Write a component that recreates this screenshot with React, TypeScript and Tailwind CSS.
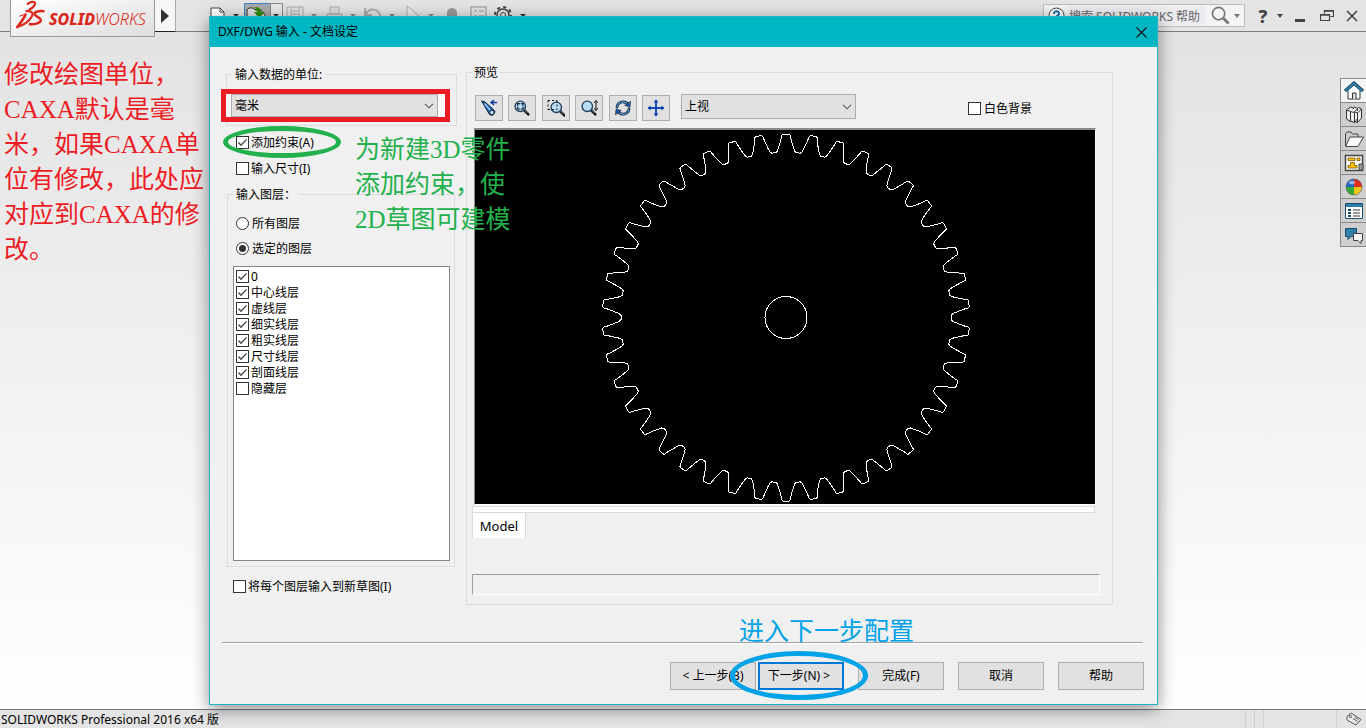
import React, { useState } from "react";

const layers = [
  { name: "0", on: true },
  { name: "中心线层", on: true },
  { name: "虚线层", on: true },
  { name: "细实线层", on: true },
  { name: "粗实线层", on: true },
  { name: "尺寸线层", on: true },
  { name: "剖面线层", on: true },
  { name: "隐藏层", on: false },
];

// half of one tooth: [radius, sideways distance from the tooth axis]
const toothProfile = [
  [183.5, 3],
  [182.5, 4],
  [179, 4.8],
  [174, 6.2],
  [169, 7.8],
  [166.5, 8.8],
  [165, 10.2],
];

const gearPath = (cx: number, cy: number, teeth: number) => {
  const points: string[] = [];
  for (let i = 0; i < teeth; i++) {
    const axis = (i * 2 * Math.PI) / teeth - Math.PI / 2;
    const left = [...toothProfile].reverse().map(([r, w]) => [r, -w / r]);
    const right = toothProfile.map(([r, w]) => [r, w / r]);
    [...left, ...right].forEach(([r, a]) => {
      const x = cx + r * Math.cos(axis + a);
      const y = cy + r * Math.sin(axis + a);
      points.push(`${x.toFixed(1)},${y.toFixed(1)}`);
    });
  }
  return `M${points.join("L")}Z`;
};

const Check: React.FC<{ label: string; defaultChecked?: boolean; className?: string }> = ({
  label,
  defaultChecked,
  className = "",
}) => (
  <label className={`flex items-center gap-0.5 whitespace-nowrap ${className}`}>
    <span className="grid">
      <input
        type="checkbox"
        defaultChecked={defaultChecked}
        className="peer col-start-1 row-start-1 size-[13px] appearance-none border border-[#333] bg-white"
      />
      <svg
        viewBox="0 0 13 13"
        className="pointer-events-none invisible col-start-1 row-start-1 size-[13px] peer-checked:visible"
      >
        <path d="M2.5 6.5 5 9.2l5.6-5.8" fill="none" stroke="#444" strokeWidth="1.3" />
      </svg>
    </span>
    <span className="pt-px">{label}</span>
  </label>
);

const Radio: React.FC<{ label: string; defaultChecked?: boolean }> = ({ label, defaultChecked }) => (
  <label className="flex h-[25px] items-center gap-[3px]">
    <span className="grid place-items-center">
      <input
        type="radio"
        name="layers"
        defaultChecked={defaultChecked}
        className="peer col-start-1 row-start-1 size-[13px] appearance-none rounded-full border border-[#333] bg-white"
      />
      <span className="pointer-events-none invisible col-start-1 row-start-1 size-[7px] rounded-full bg-[#333] peer-checked:visible"></span>
    </span>
    <span className="pt-px">{label}</span>
  </label>
);

const Dropdown: React.FC<{ label: string; options: string[]; className: string }> = ({
  label,
  options,
  className,
}) => (
  <span className={`grid items-center ${className}`}>
    <select
      aria-label={label}
      className="col-start-1 row-start-1 h-full w-full appearance-none border border-[#adadad] bg-[#e1e1e1] px-[3px]"
    >
      {options.map((option) => (
        <option key={option}>{option}</option>
      ))}
    </select>
    <svg viewBox="0 0 10 6" className="pointer-events-none col-start-1 row-start-1 mr-1 h-1.5 w-2.5 justify-self-end">
      <path d="M1 .8 5 4.8 9 .8" fill="none" stroke="#555" strokeWidth="1.1" />
    </svg>
  </span>
);

const Caret: React.FC<{ className?: string }> = ({ className = "" }) => (
  <svg viewBox="0 0 6 4" className={`h-1 w-1.5 ${className}`}>
    <path d="M0 0h6L3 4z" fill="currentColor" />
  </svg>
);

const ToolButton: React.FC<{ label: string; children: React.ReactNode }> = ({ label, children }) => (
  <button
    aria-label={label}
    className="grid h-[26px] w-7 place-items-center border border-[#adadad] bg-[#e1e1e1]"
  >
    <svg viewBox="0 0 18 18" className="size-[18px]" fill="none" strokeLinecap="round">
      {children}
    </svg>
  </button>
);

const Lens: React.FC = () => (
  <>
    <path d="m11 11 4.3 4.3" stroke="#111" strokeWidth="2.6" />
    <path d="m11.8 11.4 2.6 2.6" stroke="#9ab" strokeWidth="0.8" />
    <circle cx="7.3" cy="7.3" r="5.2" fill="#b9dcf5" stroke="#24405e" strokeWidth="1.4" />
  </>
);

const Logo: React.FC = () => (
  <svg viewBox="0 0 30 30" className="h-[30px] w-[30px]" fill="none" stroke="#da291c" strokeLinecap="round">
    <path d="M12.7 4C15 1.5 20.5.8 20 3.7c-.3 2-2.500 4-5.500 5.800" strokeWidth="2.2" />
    <path d="M11.5 11.2c5-.4 7.300 1.500 5.300 5.300C14.5 20.5 9 25 2.300 27" strokeWidth="2.2" />
    <path d="M10.5 14.5C9 18.5 5.5 23 2.3 27" strokeWidth="2.6" />
    <path d="M5 16c1.9-1 3.5-1.4 5.5-1.5" strokeWidth="1.2" />
    <path d="M28.5 11.300c-4-.6-9 .2-8.900 2.800.1 2.400 6.700 3.300 6.200 6.300-.5 2.500-5.500 4-11 3.800" strokeWidth="2.5" />
  </svg>
);

const TopBar: React.FC = () => (
  <header className="flex h-8 items-start border-b border-[#7b7b7b] bg-[#e4e4e4] pl-2.5">
    <div className="z-10 flex h-[37px] w-[145px] shrink-0 items-start border border-t-0 border-[#999] bg-gradient-to-br from-white to-[#dedede] pl-1">
      <Logo />
      <span className="mt-2 ml-1 text-base leading-[22px] whitespace-nowrap text-[#da291c] italic">
        <b className="font-extrabold">SOLID</b>
        <span className="font-light">WORKS</span>
      </span>
    </div>
    <button
      aria-label="展开菜单"
      className="grid h-8 w-[21px] shrink-0 place-items-center border-r border-b border-[#222] border-r-[#aaa] bg-[#f6f6f6]"
    >
      <svg viewBox="0 0 8 14" className="h-3.5 w-2">
        <path d="M0 0 8 7 0 14z" fill="#333" />
      </svg>
    </button>

    <div className="flex min-w-0 flex-1 items-start overflow-hidden pt-[3px] pl-8 text-[#333]">
      <svg viewBox="0 0 320 24" className="h-6 w-80 shrink-0" fill="none">
        {/* new */}
        <path d="M3 22V5h9l4 4v13z" fill="#fff" stroke="#444" />
        <path d="M12 5v4h4" stroke="#444" />
        {/* open */}
        <path d="M36.5.5h26V24h-26z" fill="#a9a9a9" stroke="#3d84c4" />
        <path d="M62.5.5h12V24h-12z" fill="#e8e8e8" stroke="#888" />
        <path d="M39 22V7l2-2h4l2 2h6l4 5v10z" fill="#ddd" stroke="#333" />
        <path d="M46 4c5 0 7 2 7 5h4l-6 6-5-6h3c0-2-1-4-3-5z" fill="#2f8a00" />
        {/* save, print, undo */}
        <path d="M79 4h16v18H79zM83 4v16M91 4v16M84 8h6M84 11h6" stroke="#aaa" />
        <path d="M122 4h9v7h-9zM119 11h15v7h-15z" fill="#ddd" stroke="#aaa" />
        <path d="M157 5v7h7M158 11c3-6 13-7 15 4" stroke="#aaa" strokeWidth="2" />
        {/* select, rebuild, properties */}
        <path d="M199 3v18l12-8z" fill="#e9e9e9" stroke="#aaa" />
        <rect x="239" y="5" width="10" height="18" rx="5" fill="#999" />
        <path d="M263 4h15v17h-15zM266 8h3M271 8h5M266 13h3M271 13h5" stroke="#aaa" strokeWidth="1.5" />
        {/* options */}
        <circle cx="295" cy="12" r="6" stroke="#444" strokeWidth="1.5" />
        <circle cx="295" cy="12" r="8" stroke="#444" strokeWidth="2" strokeDasharray="3 3.28" />
        <circle cx="295" cy="12" r="2.5" stroke="#444" />
        <path d="M25 11h6l-3 3zM65 11h6l-3 3zM312 11h6l-3 3z" fill="#333" />
        <path d="M103 11h6l-3 3zM142 11h6l-3 3zM181 11h6l-3 3zM220 11h6l-3 3z" fill="#888" />
      </svg>
    </div>

    <div className="mt-1 flex h-[23px] w-[202px] shrink-0 items-center border border-[#bbb] bg-[#f4f4f4] pl-1 text-xs text-[#777]">
      <svg viewBox="0 0 17 17" className="size-[17px]">
        <circle cx="8.5" cy="8.5" r="7.5" fill="#fff" stroke="#444" />
        <path
          d="M6 7c0-4 5.5-3.5 5 0-.3 1.5-2.5 1.5-2.5 3.5M8.5 12v2"
          fill="none"
          stroke="#2272a8"
          strokeWidth="2"
        />
      </svg>
      <input
        aria-label="搜索帮助"
        defaultValue="搜索 SOLIDWORKS 帮助"
        className="ml-1 h-[19px] min-w-0 flex-1 bg-[#ececf0] text-[#666]"
      />
      <svg viewBox="0 0 20 20" className="ml-1.5 size-[19px]" fill="none" stroke="#777">
        <circle cx="8" cy="8" r="6.5" strokeWidth="1.8" />
        <path d="m13 13 5.5 5.5" strokeWidth="3" />
      </svg>
      <Caret className="mx-1" />
    </div>
    <div className="flex h-8 shrink-0 items-center pr-2 pl-2.5 text-[#444]">
      <button aria-label="帮助" className="w-4 text-lg leading-8 font-extrabold">
        ?
      </button>
      <Caret className="ml-1.5" />
      <button aria-label="最小化" className="ml-3 h-3 w-2.5 border-b-[3px] border-[#444]"></button>
      <button aria-label="还原" className="ml-[15px]">
        <svg viewBox="0 0 14 12" className="h-3 w-3.5" fill="none" stroke="#444">
          <path d="M4.5 3.5v-3h9v6h-3M.5 4.5h9v6h-9zM.5 5.2h9M4.5 1.2h9" strokeWidth="1.2" />
        </svg>
      </button>
      <button aria-label="关闭" className="ml-3">
        <svg viewBox="0 0 12 12" className="size-3">
          <path d="m1 1 10 10M11 1 1 11" stroke="#444" strokeWidth="1.6" />
        </svg>
      </button>
    </div>
  </header>
);

const paneIcons = [
  {
    label: "主页",
    icon: (
      <>
        <path d="M4 9v9h12V9L10 4z" fill="#fff" stroke="#333" />
        <path d="M8.5 18v-6H12v6" fill="#ddd" stroke="#333" />
        <path d="m1 10 9-8 9 8" fill="none" stroke="#1f4b68" strokeWidth="3.2" />
        <path d="m1.5 10 8.5-7.5 8.5 7.5" fill="none" stroke="#2e8ab8" strokeWidth="1.6" />
      </>
    ),
  },
  {
    label: "设计库",
    icon: (
      <g fill="#eee" stroke="#333">
        <path d="m10.5 6 4-3.5 3 1.5v9l-4 4.5-3-1z" />
        <path d="m6.5 5.5 4-3.5 3 1.5v10l-3 4-4-1.5z" />
        <path d="m2.5 5 4-3L10 3.5 6.500 6.500v10l-4-2.500z" />
        <path d="m2.5 5 4 1.500L10 7.500l3.500-4M10.500 7.500v10M13.500 8v9.500M10.500 7l3 1 4-4" />
      </g>
    ),
  },
  {
    label: "文件探索器",
    icon: (
      <>
        <path d="M1.5 17V4.5L3 3h4l1.5 2H14v3" fill="#ccc" stroke="#444" />
        <path d="M1.5 17.5 6 8h13.5L14 17.5z" fill="#fafafa" stroke="#444" />
      </>
    ),
  },
  {
    label: "视图调色板",
    icon: (
      <>
        <path d="M1.5 2.5h17v15h-17z" fill="#fff" stroke="#444" strokeWidth="1.5" />
        <path
          d="M4 5h7v2.5H4zM13 5h3v2.5h-3zM6.5 9.5h4v3H13V15H4v-2.5h2.5z"
          fill="#ffc20e"
          stroke="#7a5500"
          strokeWidth=".8"
        />
        <path d="M15 11h4v6h-4z" fill="#999" stroke="#444" />
      </>
    ),
  },
  {
    label: "外观",
    icon: (
      <>
        <path d="M10 10V2a8 8 0 0 0-8 8z" fill="#2369c9" />
        <path d="M10 10h8a8 8 0 0 0-8-8z" fill="#df3020" />
        <path d="M10 10v8a8 8 0 0 0 8-8z" fill="#f4c61b" />
        <path d="M10 10H2a8 8 0 0 0 8 8z" fill="#35a936" />
        <circle cx="10" cy="10" r="8" fill="none" stroke="#444" strokeOpacity=".5" />
        <ellipse cx="8" cy="5.5" rx="3" ry="1.8" fill="#fff" fillOpacity=".5" />
      </>
    ),
  },
  {
    label: "自定义属性",
    icon: (
      <>
        <path d="M1.5 2.5h17v15h-17z" fill="#fff" stroke="#1d4c69" />
        <path d="M2 3h16v3H2z" fill="#2e7fae" />
        <path d="M4 9h3M4 12h3M4 15h3" stroke="#1d4c69" strokeWidth="2" />
        <path d="M9 9h7M9 12h7M9 15h7" stroke="#333" />
      </>
    ),
  },
  {
    label: "论坛",
    icon: (
      <>
        <path d="M1.5 3.5h11v8H7l-3 3v-3H1.5z" fill="#2f82ad" stroke="#1d4c69" />
        <path d="M9.5 8.5h9v7H17v3l-3-3H9.5z" fill="#f8f8f8" stroke="#444" />
      </>
    ),
  },
];

const Note: React.FC<{ lines: string[]; className: string }> = ({ lines, className }) => (
  <p
    className={`font-['Liberation_Serif','Noto_Sans_CJK_SC',serif] text-[25px] leading-[35px] whitespace-nowrap ${className}`}
  >
    {lines.map((line) => (
      <span key={line} className="block">
        {line}
      </span>
    ))}
  </p>
);

const LayerSettings: React.FC = () => (
  <div className="flex w-[231px] shrink-0 flex-col pt-[19px]">
    <fieldset className="border border-[#dcdcdc] pt-3 pr-[18px] pb-2 pl-1">
      <legend className="h-4 px-1 leading-[18px]">输入数据的单位:</legend>
      <div className="relative isolate">
        <div className="pointer-events-none absolute -inset-y-[5px] -right-3 -left-[10px] border-5 border-[#ed1c24] bg-[#fafafa]"></div>
        <Dropdown label="输入数据的单位" options={["毫米", "厘米", "米", "英寸"]} className="relative h-[23px]" />
      </div>
    </fieldset>

    <div className="relative mt-[3px] pl-2.5">
      <Check label="添加约束(A)" defaultChecked className="h-[26px]" />
      <Check label="输入尺寸(I)" className="h-[26px]" />
      <div className="pointer-events-none absolute -top-[3px] -left-[3px] h-8 w-[118px] rounded-[50%] border-5 border-[#22b14c]"></div>
    </div>

    <fieldset className="mt-[5px] mr-0.5 ml-px border border-[#dcdcdc] pt-[9px] pr-1 pb-[5px] pl-[5px]">
      <legend className="h-4 px-[3px] leading-[18px]">输入图层：</legend>
      <div className="pl-[3px]">
        <Radio label="所有图层" />
        <Radio label="选定的图层" defaultChecked />
      </div>
      <ul className="mt-[5px] min-h-[295px] border border-[#82878f] bg-white py-px pl-0.5">
        {layers.map((layer) => (
          <li key={layer.name}>
            <Check label={layer.name} defaultChecked={layer.on} className="h-4" />
          </li>
        ))}
      </ul>
    </fieldset>

    <Check label="将每个图层输入到新草图(I)" className="mt-[11px] h-4 pl-[7px]" />
  </div>
);

const Preview: React.FC = () => {
  const [white, setWhite] = useState(false);

  return (
    <fieldset className="mt-[17px] min-w-0 flex-1 border border-[#dcdcdc] pt-3.5 pr-3 pb-[9px] pl-[5px]">
      <legend className="h-4 px-0.5 leading-[18px]">预览</legend>
      <div className="flex h-[27px] items-end pl-[3px]">
        <div className="flex gap-1.5">
          <div className="flex gap-[5px]">
            <ToolButton label="上一视图">
              <path d="m2 2 3 1 8.5 7.5a3 3 0 0 1-4 5L4.5 7z" fill="#1b62b8" stroke="#123" />
              <path d="m5 5 5 6" stroke="#9cf" strokeWidth="1.5" />
              <circle cx="12" cy="13.5" r="2.3" fill="#c6e5fa" stroke="#123" />
              <path d="M16.5 3.5h-5M13.5 1.5l-2.5 2 2.5 2" stroke="#0a3ca0" strokeWidth="1.5" />
            </ToolButton>
            <ToolButton label="整屏显示">
              <Lens />
              <path
                d="M4.7 6.5V4.7h1.8M8.2 4.7H10v1.8M10 8.2V10H8.2M6.5 10H4.7V8.2"
                stroke="#123"
                strokeWidth="1.2"
              />
            </ToolButton>
          </div>
          <div className="flex gap-[5px]">
            <ToolButton label="局部放大">
              <g transform="translate(2 1)">
                <Lens />
              </g>
              <path
                d="M1 1.5h9M1 1.5v9M1 10.5h9M10 1.5v9"
                stroke="#111"
                strokeDasharray="2 2"
                strokeLinecap="butt"
              />
            </ToolButton>
            <ToolButton label="放大或缩小">
              <Lens />
              <path d="M16 2v9M14.5 3.500l1.500-2 1.500 2M14.500 9.500l1.500 2 1.500-2" stroke="#111" />
            </ToolButton>
          </div>
          <div className="flex gap-[5px]">
            <ToolButton label="旋转视图">
              <path d="M3 8c1-5.500 8-7 11-2.500M15 10c-1 5.500-8 7-11 2.500" stroke="#123" strokeWidth="2.8" />
              <path d="M3 8c1-5.500 8-7 11-2.500M15 10c-1 5.500-8 7-11 2.500" stroke="#5aa6ea" strokeWidth="1.2" />
              <path d="m16.5 2.5-.5 5.500-5-1.500zM1.500 15.500 2 10l5 1.500z" fill="#1659ad" stroke="#123" strokeWidth=".6" />
            </ToolButton>
            <ToolButton label="平移">
              <path d="M9 2v14M2 9h14" stroke="#0d46b0" strokeWidth="1.8" />
              <path
                d="M9 .5l-2.500 3h5zM9 17.500l-2.500-3h5zM.5 9l3-2.500v5zM17.500 9l-3-2.500v5z"
                fill="#0d46b0"
              />
            </ToolButton>
          </div>
        </div>
        <Dropdown
          label="视图方向"
          options={["上视", "前视", "右视"]}
          className="ml-[11px] h-[25px] w-[175px] self-start"
        />
        <label className="mr-[68px] mb-[5px] ml-auto flex h-4 items-center gap-[3px] whitespace-nowrap">
          <input
            type="checkbox"
            checked={white}
            onChange={(e) => setWhite(e.target.checked)}
            className="size-[13px] appearance-none border border-[#333] bg-white checked:bg-[#333]"
          />
          <span className="pt-px">白色背景</span>
        </label>
      </div>

      <div className="mt-[7px] mr-1 ml-0.5 border border-t-2 border-[#8a8a8a] border-r-white border-b-white">
        <svg
          viewBox="0 0 620 374"
          className={`block h-[374px] w-full ${white ? "bg-white text-black" : "bg-black text-white"}`}
          fill="none"
          stroke="currentColor"
          shapeRendering="crispEdges"
        >
          <path d={gearPath(311, 187.5, 42)} />
          <circle cx="311" cy="187.5" r="21" />
        </svg>
      </div>
      <div className="mt-px mr-[5px] h-[7px] border border-[#dadada] bg-white"></div>
      <button className="block h-[25px] w-[54px] border-x border-[#dadada] bg-white pt-0.5 text-center text-[13px]">
        Model
      </button>
      <div className="mt-9 h-[21px] border border-[#a0a0a0] border-r-white border-b-white"></div>
    </fieldset>
  );
};

const ImportDialog: React.FC = () => (
  <section
    role="dialog"
    aria-label="DXF/DWG 输入"
    className="absolute top-4 right-[208px] left-[209px] z-20 min-w-[900px] border border-[#1fb5c4] bg-[#f0f0f0] shadow-[0_4px_16px_rgba(0,0,0,0.45)]"
  >
    <div className="flex h-[30px] items-center justify-between bg-[#00b7c3] pr-2.5 pl-2">
      <h1>DXF/DWG 输入 - 文档设定</h1>
      <button aria-label="关闭">
        <svg viewBox="0 0 11 11" className="size-[11px]">
          <path d="m.5.5 10 10M10.5.5l-10 10" stroke="#111" strokeWidth="1.1" />
        </svg>
      </button>
    </div>

    <div className="flex gap-[9px] pr-11 pl-4">
      <LayerSettings />
      <Preview />
    </div>
    <Note
      lines={["为新建3D零件", "添加约束，使", "2D草图可建模"]}
      className="absolute top-[115px] left-[145px] text-[#22b14c]"
    />

    <div className="relative mt-[37px] mr-3.5 ml-3 border-t border-b border-t-[#a0a0a0] border-b-white">
      <Note lines={["进入下一步配置"]} className="absolute -top-[29px] right-[229px] text-[#00a2e8]" />
    </div>

    <div className="flex justify-end gap-3.5 pt-[18px] pr-[13px] pb-3.5">
      <div className="flex gap-0.5">
        <button className="h-7 w-[86px] border border-[#adadad] bg-[#e1e1e1]">&lt; 上一步(B)</button>
        <div className="relative">
          <button className="h-7 w-[86px] border-2 border-[#0078d7] bg-[#e1e1e1] pr-1">下一步(N) &gt;</button>
          <div className="pointer-events-none absolute -top-[11px] -left-7 z-10 h-[49px] w-[138px] rounded-[50%] border-5 border-[#00a2e8]"></div>
        </div>
      </div>
      <button className="h-7 w-[86px] border border-[#adadad] bg-[#e1e1e1]">完成(F)</button>
      <button className="h-7 w-[86px] border border-[#adadad] bg-[#e1e1e1]">取消</button>
      <button className="h-7 w-[86px] border border-[#adadad] bg-[#e1e1e1]">帮助</button>
    </div>
  </section>
);

const App: React.FC = () => {
  return (
    <div className="relative flex min-h-screen flex-col overflow-hidden bg-[#e4e4e4] font-['Noto_Sans','Noto_Sans_CJK_SC',sans-serif] text-xs text-black">
      <TopBar />

      <main className="flex flex-1 items-start justify-between bg-gradient-to-b from-[#e3e3e3] to-white">
        <Note
          lines={["修改绘图单位，", "CAXA默认是毫", "米，如果CAXA单", "位有修改，此处应", "对应到CAXA的修", "改。"]}
          className="pt-[25px] pl-1 text-[#ed1c24]"
        />
        <nav className="mt-[46px] flex w-[26px] flex-col border-t border-l border-[#888]">
          {paneIcons.map((item) => (
            <button
              key={item.label}
              aria-label={item.label}
              className="grid h-6 place-items-center border-b border-[#888] bg-[#cfcfcf] first:bg-[#f5f5f5]"
            >
              <svg viewBox="0 0 20 20" className="size-5">
                {item.icon}
              </svg>
            </button>
          ))}
        </nav>
      </main>

      <footer className="flex h-[19px] items-center justify-between border-t border-[#7b7b7b] bg-[#e4e4e4] pr-[3px] pl-px">
        <span className="pt-0.5 leading-4">SOLIDWORKS Professional 2016 x64 版</span>
        <div className="flex h-full items-center">
          <div className="flex h-full w-[92px] gap-2 border-x border-[#d0d0d0] pl-2">
            <span className="border-l border-[#d0d0d0]"></span>
            <span className="border-l border-[#d0d0d0]"></span>
          </div>
          <button aria-label="标签" className="ml-2">
            <svg viewBox="0 0 18 16" className="h-4 w-[18px]" fill="#eee" stroke="#555">
              <path d="M2 5.5 6 2l10 6.5-5 5.5L2 9z" />
              <circle cx="5.5" cy="5.5" r="1.2" />
              <path d="m8 7.5 4.5 3M9.5 6l4 2.8" />
            </svg>
          </button>
        </div>
      </footer>

      <ImportDialog />
    </div>
  );
};

export default App;
